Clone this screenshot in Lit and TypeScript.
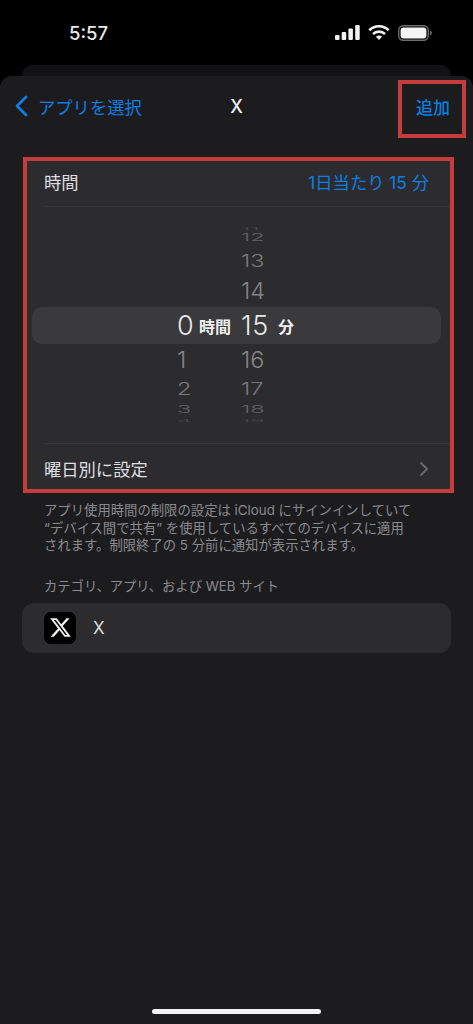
import { LitElement, html, css } from "lit";
import { customElement } from "lit/decorators.js";

interface Row { h: number; hour?: string; min: string; sy: number; op: number; dy: number; }

const ROWS_TOP: Row[] = [
  { h: 8, min: "11", sy: 0.14, op: 0.3, dy: 0 },
  { h: 14, min: "12", sy: 0.45, op: 0.55, dy: -2 },
  { h: 27, min: "13", sy: 0.76, op: 0.8, dy: 0 },
  { h: 33, min: "14", sy: 0.95, op: 0.92, dy: 0 },
];
const ROWS_BOTTOM: Row[] = [
  { h: 31, hour: "1", min: "16", sy: 0.95, op: 0.92, dy: 0 },
  { h: 25, hour: "2", min: "17", sy: 0.76, op: 0.8, dy: 1 },
  { h: 16, hour: "3", min: "18", sy: 0.45, op: 0.55, dy: 2 },
  { h: 8, hour: "4", min: "19", sy: 0.14, op: 0.3, dy: 1 },
];

@customElement("app-root")
export class AppRoot extends LitElement {
  static styles = css`
    :host {
      display: block;
      width: 473px;
      height: 1024px;
      overflow: hidden;
      background: #000;
      font-family: Inter, "Noto Sans CJK JP", sans-serif;
      color: #e4e4e6;
    }
    .page { display: flex; flex-direction: column; height: 1024px; }
    .status {
      height: 65px;
      flex: none;
      display: flex;
      align-items: center;
      padding: 0 41px 0 69px;
      box-sizing: border-box;
    }
    .time { font-size: 18.5px; font-weight: 500; color: #e8e8e8; flex: 1; }
    .status-icons { display: flex; align-items: center; gap: 8px; }
    .status-icons svg { display: block; }
    .peek {
      height: 11px;
      flex: none;
      margin: 0 22px;
      background: #121214;
      border-radius: 10px 10px 0 0;
    }
    .sheet {
      flex: 1;
      display: flex;
      flex-direction: column;
      background: #1c1c1e;
      border-radius: 12px 12px 0 0;
      padding-top: 4px;
    }
    .nav {
      height: 58px;
      flex: none;
      display: grid;
      grid-template-columns: 1fr auto 1fr;
      align-items: center;
    }
    .back {
      display: flex;
      align-items: center;
      gap: 10px;
      padding-left: 15px;
      margin-bottom: 6px;
      color: #0b7fe4;
      font-size: 17.3px;
    }
    .back svg { display: block; }
    .title { font-size: 18px; font-weight: 500; color: #eee; margin-bottom: 6px; }
    .add {
      justify-self: end;
      width: 68px;
      height: 58px;
      margin-right: 7px;
      box-sizing: border-box;
      border: 4px solid #c43c3c;
      color: #0b7fe4;
      font-size: 17px;
      font-weight: 500;
      display: flex;
      align-items: center;
      justify-content: center;
      padding: 0 0 6px 2px;
    }
    .card {
      margin: 19px 0 0 23px;
      width: 431px;
      height: 336px;
      flex: none;
      box-sizing: border-box;
      border: 4px solid #c43c3c;
      background: #2c2c2e;
      display: flex;
      flex-direction: column;
    }
    .row {
      height: 45px;
      flex: none;
      box-sizing: border-box;
      display: flex;
      align-items: center;
      justify-content: space-between;
      padding: 0 21px 0 17px;
      font-size: 17.3px;
      color: #dedee0;
    }
    .row.first { padding-bottom: 4px; }
    .row.last { padding-top: 4px; }
    .row .value { color: #0b7fe4; }
    .picker {
      flex: 1;
      margin-left: 17px;
      border-top: 1px solid #363638;
      border-bottom: 1px solid #363638;
    }
    .wheel { margin: 18px 9px 0 -12px; }
    .wheel-row {
      display: grid;
      grid-template-columns: 22px 42px 37px auto;
      grid-template-rows: minmax(0, 1fr);
      padding-left: 145px;
      align-items: center;
      font-size: 23.5px;
      font-weight: 300;
      color: #8e8e92;
    }
    .digit { display: block; transform-origin: center; line-height: 1; white-space: nowrap; }
    .selected {
      height: 37px;
      background: #3a3a3c;
      border-radius: 10px;
      color: #e8e8ea;
      font-size: 27px;
      letter-spacing: 0.5px;
    }
    .unit { font-size: 16px; font-weight: 600; color: #f0f0f0; letter-spacing: 0; }
    .chev { display: block; }
    .note {
      margin: 9px 0 0 44px;
      font-size: 13.35px;
      line-height: 17.5px;
      color: #8b8b8e;
      white-space: nowrap;
    }
    .section {
      margin: 22px 0 0 44px;
      font-size: 13.3px;
      line-height: 18px;
      color: #8b8b8e;
    }
    .app {
      margin: 8px 22px 0;
      height: 50px;
      flex: none;
      background: #2c2c2e;
      border-radius: 12px;
      display: flex;
      align-items: center;
      padding-left: 22px;
      gap: 17px;
      font-size: 17px;
      color: #dcdcde;
    }
    .x-icon {
      width: 32px;
      height: 32px;
      background: #000;
      border-radius: 7px;
      display: flex;
      align-items: center;
      justify-content: center;
    }
    .home {
      margin: auto 0 10px 152px;
      width: 169px;
      height: 5px;
      border-radius: 3px;
      background: #f2f2f2;
      flex: none;
    }
  `;

  private wheelRow(r: Row) {
    const s = `transform:translateY(${r.dy}px) scaleY(${r.sy});opacity:${r.op}`;
    return html`<div class="wheel-row" style="height:${r.h}px">
      <span class="digit" style=${s}>${r.hour ?? ""}</span>
      <span></span>
      <span class="digit" style=${s}>${r.min}</span>
    </div>`;
  }

  render() {
    return html`<div class="page">
      <div class="status">
        <span class="time">5:57</span>
        <div class="status-icons">
          <svg width="25" height="15" viewBox="0 0 25 15" fill="#f2f2f2">
            <rect x="0" y="10" width="4.5" height="5" rx="1"/>
            <rect x="6.7" y="7" width="4.5" height="8" rx="1"/>
            <rect x="13.4" y="3.5" width="4.5" height="11.5" rx="1"/>
            <rect x="20.2" y="0" width="4.5" height="15" rx="1"/>
          </svg>
          <svg width="22" height="15" viewBox="0 0 22 15" fill="none" stroke="#f2f2f2" stroke-width="2.6">
            <path d="M1.3 5.2 A14 14 0 0 1 20.7 5.2"/>
            <path d="M5 9 A8.8 8.8 0 0 1 17 9"/>
            <path d="M11 15 L7.9 11.8 A4.4 4.4 0 0 1 14.1 11.8 Z" fill="#f2f2f2" stroke="none"/>
          </svg>
          <svg width="34" height="16" viewBox="0 0 34 16">
            <rect x="0.7" y="0.7" width="29.6" height="14.6" rx="4.5" fill="none" stroke="#6e6e6e" stroke-width="1.4"/>
            <rect x="2.6" y="2.6" width="25.8" height="10.8" rx="3" fill="#f4f4f4"/>
            <path d="M32 5.5 C33.2 6 33.8 7 33.8 8 C33.8 9 33.2 10 32 10.5 Z" fill="#6e6e6e"/>
          </svg>
        </div>
      </div>
      <div class="peek"></div>
      <div class="sheet">
        <div class="nav">
          <div class="back">
            <svg width="13" height="22" viewBox="0 0 13 22" fill="none" stroke="#0b7fe4" stroke-width="2.8" stroke-linecap="round" stroke-linejoin="round">
              <path d="M11 2 L2 11 L11 20"/>
            </svg>
            <span>アプリを選択</span>
          </div>
          <div class="title">X</div>
          <div class="add">追加</div>
        </div>
        <div class="card">
          <div class="row first">
            <span>時間</span>
            <span class="value">1日当たり 15 分</span>
          </div>
          <div class="picker">
            <div class="wheel">
              ${ROWS_TOP.map((r) => this.wheelRow(r))}
              <div class="wheel-row selected">
                <span class="digit">0</span>
                <span class="unit">時間</span>
                <span class="digit">15</span>
                <span class="unit">分</span>
              </div>
              ${ROWS_BOTTOM.map((r) => this.wheelRow(r))}
            </div>
          </div>
          <div class="row last">
            <span>曜日別に設定</span>
            <svg class="chev" width="10" height="16" viewBox="0 0 10 16" fill="none" stroke="#68686c" stroke-width="2" stroke-linecap="round" stroke-linejoin="round">
              <path d="M2 2 L8 8 L2 14"/>
            </svg>
          </div>
        </div>
        <div class="note">アプリ使用時間の制限の設定は iCloud にサインインしていて<br>“デバイス間で共有” を使用しているすべてのデバイスに適用<br>されます。制限終了の 5 分前に通知が表示されます。</div>
        <div class="section">カテゴリ、アプリ、および WEB サイト</div>
        <div class="app">
          <div class="x-icon">
            <svg width="23" height="23" viewBox="0 0 24 24" fill="#f0f0f0">
              <path d="M18.244 2.25h3.308l-7.227 8.26 8.502 11.24H16.17l-5.214-6.817L4.99 21.75H1.68l7.73-8.835L1.254 2.25H8.08l4.713 6.231zm-1.161 17.52h1.833L7.084 4.126H5.117z"/>
            </svg>
          </div>
          <span>X</span>
        </div>
        <div class="home"></div>
      </div>
    </div>`;
  }
}
